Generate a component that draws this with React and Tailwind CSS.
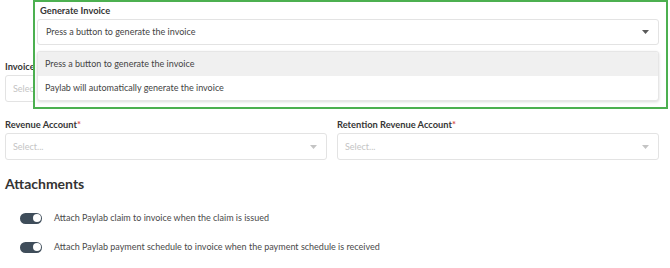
import React from "react";

function Caret({ color = "#6b6b6b" }) {
  return (
    <svg width="7" height="4" viewBox="0 0 7 4" className="shrink-0">
      <path d="M0 0 L7 0 L3.5 4 Z" fill={color} />
    </svg>
  );
}

function Field({ label, required, className = "" }) {
  return (
    <div className={"flex flex-col " + className}>
      <div className="text-[9.3px] leading-[12px] font-bold text-[#363636] mb-[2px]">
        {label}
        {required && <span className="text-[#d9534f]">*</span>}
      </div>
      <div className="h-[27px] rounded-[3px] border border-[#e3e3e3] bg-white flex items-center justify-between pl-[7px] pr-[9px]">
        <span className="text-[9px] text-[#c4c4c4]">Select...</span>
        <Caret color="#c4c4c4" />
      </div>
    </div>
  );
}

function Toggle({ label }) {
  return (
    <div className="flex items-center h-[16px] pl-[15px]">
      <div className="w-[22px] h-[11px] rounded-full bg-[#3f4d5a] flex items-center justify-end pr-[1.5px]">
        <div className="w-[8px] h-[8px] rounded-full bg-white" />
      </div>
      <span className="ml-[12px] text-[9px] text-[#4a4a4a]">{label}</span>
    </div>
  );
}

export default function App() {
  return (
    <div
      className="relative w-[670px] h-[268px] bg-white overflow-hidden"
      style={{ fontFamily: "Lato, 'Open Sans', sans-serif" }}
    >
      <div className="pl-[5px] pr-[11px]">
        <div className="h-[61px]" />
        <div className="grid grid-cols-2 gap-x-[10px]">
          <Field label="Invoice Status" />
          <Field label="Invoice Template" />
        </div>
        <div className="grid grid-cols-2 gap-x-[10px] mt-[17px]">
          <Field label="Revenue Account" required />
          <Field label="Retention Revenue Account" required />
        </div>
        <div className="mt-[14px] text-[14px] leading-[20px] font-bold text-[#333]">
          Attachments
        </div>
        <div className="mt-[16px] flex flex-col gap-[13px]">
          <Toggle label="Attach Paylab claim to invoice when the claim is issued" />
          <Toggle label="Attach Paylab payment schedule to invoice when the payment schedule is received" />
        </div>
      </div>

      <div className="absolute left-[33px] top-[0px] w-[635px] h-[109px] border-2 border-[#4cb050] bg-white pl-[2px] pr-[7px]">
        <div className="text-[9.3px] leading-[12px] font-bold text-[#363636] pl-[3px] mt-[3px]">
          Generate Invoice
        </div>
        <div className="mt-[2px] h-[26px] rounded-[3px] border border-[#e3e3e3] bg-white flex items-center justify-between pl-[8px] pr-[9px]">
          <span className="text-[9px] text-[#444]">Press a button to generate the invoice</span>
          <Caret color="#5a5a5a" />
        </div>
        <div className="mt-[6px] rounded-[3px] border border-[#e6e6e6] bg-white shadow-[0_1px_3px_rgba(0,0,0,0.15)] overflow-hidden">
          <div className="h-[24px] bg-[#f0f0f0] flex items-center pl-[7px] text-[9px] text-[#444]">
            Press a button to generate the invoice
          </div>
          <div className="h-[24px] flex items-center pl-[7px] text-[9px] text-[#444]">
            Paylab will automatically generate the invoice
          </div>
        </div>
      </div>
    </div>
  );
}
